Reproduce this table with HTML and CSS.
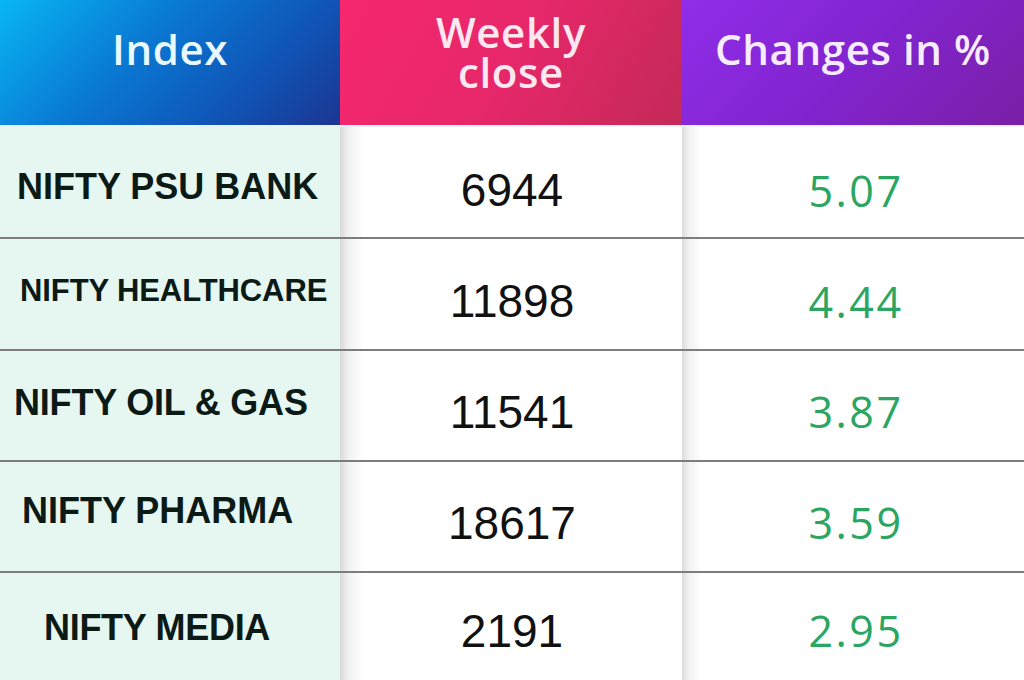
FILE: index.html
```html
<!DOCTYPE html>
<html>
<head>
<meta charset="utf-8">
<link rel="stylesheet" href="styles.css">
</head>
<body>
<div class="table">
  <div class="head head-index"><span>Index</span></div>
  <div class="head head-close"><span>Weekly<br>close</span></div>
  <div class="head head-change"><span>Changes in %</span></div>

  <div class="cell name r1"><span class="lbl l-psu">NIFTY PSU BANK</span></div>
  <div class="cell val r1">6944</div>
  <div class="cell pct r1">5.07</div>

  <div class="cell name r2 line"><span class="lbl l-health">NIFTY HEALTHCARE</span></div>
  <div class="cell val r2 line">11898</div>
  <div class="cell pct r2 line">4.44</div>

  <div class="cell name r3 line"><span class="lbl l-oil">NIFTY OIL &amp; GAS</span></div>
  <div class="cell val r3 line">11541</div>
  <div class="cell pct r3 line">3.87</div>

  <div class="cell name r4 line"><span class="lbl l-pharma">NIFTY PHARMA</span></div>
  <div class="cell val r4 line">18617</div>
  <div class="cell pct r4 line">3.59</div>

  <div class="cell name r5 line"><span class="lbl l-media">NIFTY MEDIA</span></div>
  <div class="cell val r5 line">2191</div>
  <div class="cell pct r5 line">2.95</div>
</div>
</body>
</html>
```

FILE: styles.css
```css
html, body {
  margin: 0;
  padding: 0;
  background: #ffffff;
}

.table {
  width: 1024px;
  height: 680px;
  display: grid;
  grid-template-columns: 340px 342px 342px;
  grid-template-rows: 127px 110px 112px 111px 111px 109px;
  overflow: hidden;
}

.head {
  display: flex;
  align-items: center;
  justify-content: center;
  padding-bottom: 28px;
  box-sizing: border-box;
  font-family: "Open Sans", "Liberation Sans", sans-serif;
  font-weight: 600;
  font-size: 42px;
  letter-spacing: 0.6px;
  text-align: center;
  border-bottom: 2px solid #e9f4f6;
}

.head-index {
  background: linear-gradient(135deg, #08b6f4 0%, #0a78d2 40%, #0f57b8 70%, #1c3592 100%);
  color: #eaf8ff;
}

.head-close {
  background: linear-gradient(120deg, #f7276f 0%, #e6276a 50%, #c32a57 100%);
  color: #fde8f0;
  line-height: 40px;
  padding-bottom: 22px;
}

.head-change {
  background: linear-gradient(135deg, #8f2de8 0%, #8224cf 50%, #7a1fa6 100%);
  color: #f6ecff;
}

.cell {
  display: flex;
  align-items: center;
  box-sizing: border-box;
}

.line {
  border-top: 2px solid #7d7d7d;
}

.name {
  background: #e6f6f1;
  justify-content: flex-start;
  font-family: "Liberation Sans", Arial, sans-serif;
  font-weight: 700;
  color: #0c1a16;
  font-size: 36px;
}

.lbl {
  display: block;
  white-space: nowrap;
}

.l-psu { padding-left: 17px; margin-top: 10px; }
.l-health { padding-left: 20px; font-size: 31px; letter-spacing: -0.1px; margin-top: -6px; }
.l-oil { padding-left: 14px; margin-top: -6px; letter-spacing: -0.2px; }
.l-pharma { padding-left: 22px; margin-top: -12px; }
.l-media { padding-left: 44px; margin-top: 2px; letter-spacing: -0.3px; }

.val {
  justify-content: center;
  background: linear-gradient(to right, #d9d9d9 0px, #f1f1f1 8px, #ffffff 24px);
  font-family: "Liberation Sans", Arial, sans-serif;
  font-size: 46px;
  color: #111111;
  padding-left: 2px;
}

.val.r1 { padding-top: 16px; }
.val.r2 { padding-top: 14px; }
.val.r3 { padding-top: 12px; }
.val.r4 { padding-top: 12px; }
.val.r5 { padding-top: 8px; }

.pct {
  justify-content: center;
  background: linear-gradient(to right, #dcdcdc 0px, #f2f2f2 7px, #ffffff 20px);
  font-family: "Open Sans", "Liberation Sans", sans-serif;
  font-size: 43px;
  font-weight: 400;
  letter-spacing: 2.5px;
  color: #2aa662;
  padding-left: 6px;
}

.pct.r1 { padding-top: 16px; }
.pct.r2 { padding-top: 14px; }
.pct.r3 { padding-top: 12px; }
.pct.r4 { padding-top: 12px; }
.pct.r5 { padding-top: 8px; }
```
